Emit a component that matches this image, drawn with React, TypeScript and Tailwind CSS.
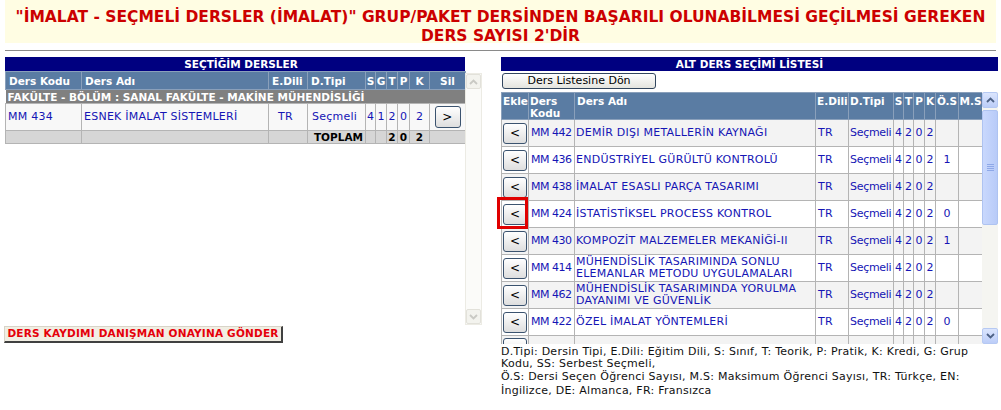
import React from "react";

type AltRow = {
  kod: string;
  ad: string[];
  os: string;
};

const altRows: AltRow[] = [
  { kod: "MM 442", ad: ["DEMİR DIŞI METALLERİN KAYNAĞI"], os: "" },
  { kod: "MM 436", ad: ["ENDÜSTRİYEL GÜRÜLTÜ KONTROLÜ"], os: "1" },
  { kod: "MM 438", ad: ["İMALAT ESASLI PARÇA TASARIMI"], os: "" },
  { kod: "MM 424", ad: ["İSTATİSTİKSEL PROCESS KONTROL"], os: "0" },
  { kod: "MM 430", ad: ["KOMPOZİT MALZEMELER MEKANİĞİ-II"], os: "1" },
  { kod: "MM 414", ad: ["MÜHENDİSLİK TASARIMINDA SONLU", "ELEMANLAR METODU UYGULAMALARI"], os: "" },
  { kod: "MM 462", ad: ["MÜHENDİSLİK TASARIMINDA YORULMA", "DAYANIMI VE GÜVENLİK"], os: "" },
  { kod: "MM 422", ad: ["ÖZEL İMALAT YÖNTEMLERİ"], os: "0" },
];

function Chevron({ up, color }: { up?: boolean; color: string }) {
  return (
    <svg width="9" height="6" viewBox="0 0 9 6">
      <path
        d={up ? "M1 5 L4.5 1.5 L8 5" : "M1 1 L4.5 4.5 L8 1"}
        fill="none"
        stroke={color}
        strokeWidth="1.8"
      />
    </svg>
  );
}

function SmallBtn({ label }: { label: string }) {
  return (
    <div className="flex h-[21px] w-[24px] items-center justify-center rounded-[3px] border border-[#3b536f] bg-gradient-to-b from-[#ffffff] to-[#dedede] text-[12px] leading-none tracking-normal text-black">
      {label}
    </div>
  );
}

function LeftPanel() {
  return (
    <div className="flex w-[477px] flex-col">
      <div className="h-[14px] w-[460px] bg-[#000080] pl-[12px] text-center text-[10.5px] font-bold leading-[14px] text-white">
        SEÇTİĞİM DERSLER
      </div>
      <div className="flex h-[254px]">
        <div className="w-[460px]">
          <table className="w-[460px] table-fixed border-collapse text-[11px] leading-[12px] tracking-[0.25px]">
            <colgroup>
              <col className="w-[76px]" />
              <col className="w-[187px]" />
              <col className="w-[39px]" />
              <col className="w-[58px]" />
              <col className="w-[10px]" />
              <col className="w-[11px]" />
              <col className="w-[11px]" />
              <col className="w-[12px]" />
              <col className="w-[20px]" />
              <col className="w-[36px]" />
            </colgroup>
            <thead>
              <tr className="h-[18px] bg-[#5a7ca3] text-left text-[10.5px] font-bold tracking-normal text-white">
                <th className="border border-[#8aa0bb] pl-[3px]">Ders Kodu</th>
                <th className="border border-[#8aa0bb] pl-[3px]">Ders Adı</th>
                <th className="border border-[#8aa0bb] pl-[3px]">E.Dili</th>
                <th className="border border-[#8aa0bb] pl-[3px]">D.Tipi</th>
                <th className="border border-[#8aa0bb] text-center">S</th>
                <th className="border border-[#8aa0bb] text-center">G</th>
                <th className="border border-[#8aa0bb] text-center">T</th>
                <th className="border border-[#8aa0bb] text-center">P</th>
                <th className="border border-[#8aa0bb] text-center">K</th>
                <th className="border border-[#8aa0bb] text-center">Sil</th>
              </tr>
            </thead>
            <tbody>
              <tr className="h-[14px] bg-[#808080] text-[10.5px] font-bold tracking-normal text-white">
                <td colSpan={10} className="whitespace-nowrap pl-[2px]">
                  FAKÜLTE - BÖLÜM : SANAL FAKÜLTE - MAKİNE MÜHENDİSLİĞİ
                </td>
              </tr>
              <tr className="h-[27px] bg-[#f8f8f8] text-[#1515b5]">
                <td className="border border-[#b4b4b4] pl-[2px]">MM 434</td>
                <td className="border border-[#b4b4b4] pl-[2px]">ESNEK İMALAT SİSTEMLERİ</td>
                <td className="border border-[#b4b4b4] pl-[9px]">TR</td>
                <td className="border border-[#b4b4b4] pl-[4px]">Seçmeli</td>
                <td className="border border-[#b4b4b4] text-center">4</td>
                <td className="border border-[#b4b4b4] text-center">1</td>
                <td className="border border-[#b4b4b4] text-center">2</td>
                <td className="border border-[#b4b4b4] text-center">0</td>
                <td className="border border-[#b4b4b4] text-center">2</td>
                <td className="border border-[#b4b4b4]">
                  <div className="flex justify-center">
                    <div className="flex h-[22px] w-[26px] items-center justify-center rounded-[3px] border border-[#3b536f] bg-gradient-to-b from-[#ffffff] to-[#dedede] text-[12px] leading-none text-black">
                      &gt;
                    </div>
                  </div>
                </td>
              </tr>
              <tr className="h-[12px] bg-[#d6d6d6] text-[10.5px] font-bold tracking-normal text-black">
                <td className="border border-[#b4b4b4]"></td>
                <td className="border border-[#b4b4b4]"></td>
                <td className="border border-[#b4b4b4]"></td>
                <td className="border border-[#b4b4b4] pr-[2px] text-right">TOPLAM</td>
                <td className="border border-[#b4b4b4]"></td>
                <td className="border border-[#b4b4b4]"></td>
                <td className="border border-[#b4b4b4] text-center">2</td>
                <td className="border border-[#b4b4b4] text-center">0</td>
                <td className="border border-[#b4b4b4] text-center">2</td>
                <td className="border border-[#b4b4b4]"></td>
              </tr>
            </tbody>
          </table>
        </div>
        <div className="mt-[2px] flex w-[17px] flex-col justify-between border border-[#ecebe4] bg-[#fbfbf9]">
          <div className="flex h-[15px] items-center justify-center rounded-[2px] border border-[#e2e1da] bg-[#f3f3ee]">
            <Chevron up color="#c9c9c4" />
          </div>
          <div className="flex h-[15px] items-center justify-center rounded-[2px] border border-[#e2e1da] bg-[#f3f3ee]">
            <Chevron color="#c9c9c4" />
          </div>
        </div>
      </div>
      <div className="-ml-[1px] mt-[1px] flex h-[17px] w-[279px] items-center justify-center border-b-2 border-l border-r-2 border-t border-b-[#404040] border-l-[#d8d4c8] border-r-[#404040] border-t-[#d8d4c8] bg-[#f1eee3] text-[10.5px] font-bold tracking-[0.2px] text-[#e5000a]">
        DERS KAYDIMI DANIŞMAN ONAYINA GÖNDER
      </div>
    </div>
  );
}

function RightPanel() {
  const cell = "border border-[#b4b4b4]";
  return (
    <div className="ml-[19px] flex w-[497px] flex-col">
      <div className="h-[14px] w-full bg-[#000080] text-center text-[10.5px] font-bold leading-[14px] text-white">
        ALT DERS SEÇİMİ LİSTESİ
      </div>
      <div className="ml-[1px] mt-[2px] flex h-[16px] w-[154px] items-center justify-center rounded-[3px] border border-[#32465e] bg-gradient-to-b from-[#ffffff] to-[#e4e4de] text-[11px] text-black">
        Ders Listesine Dön
      </div>
      <div className="relative mt-[3px] flex h-[252px]">
        <div className="h-[252px] w-[482px] overflow-hidden">
          <table className="w-[481px] table-fixed border-collapse text-[11px] leading-[12px] tracking-[0.25px]">
            <colgroup>
              <col className="w-[27px]" />
              <col className="w-[46px]" />
              <col className="w-[241px]" />
              <col className="w-[33px]" />
              <col className="w-[45px]" />
              <col className="w-[10px]" />
              <col className="w-[10px]" />
              <col className="w-[11px]" />
              <col className="w-[11px]" />
              <col className="w-[23px]" />
              <col className="w-[24px]" />
            </colgroup>
            <thead>
              <tr className="h-[26px] bg-[#5a7ca3] text-left align-top text-[10.5px] font-bold tracking-normal text-white">
                <th className="border border-[#8aa0bb] pl-[1px] pt-[2px]">Ekle</th>
                <th className="border border-[#8aa0bb] pl-[1px] pt-[2px]">
                  Ders
                  <br />
                  Kodu
                </th>
                <th className="border border-[#8aa0bb] pl-[2px] pt-[2px]">Ders Adı</th>
                <th className="border border-[#8aa0bb] pl-[1px] pt-[2px]">E.Dili</th>
                <th className="border border-[#8aa0bb] pl-[1px] pt-[2px]">D.Tipi</th>
                <th className="border border-[#8aa0bb] pt-[2px] text-center">S</th>
                <th className="border border-[#8aa0bb] pt-[2px] text-center">T</th>
                <th className="border border-[#8aa0bb] pt-[2px] text-center">P</th>
                <th className="border border-[#8aa0bb] pt-[2px] text-center">K</th>
                <th className="border border-[#8aa0bb] pt-[2px] text-center">Ö.S</th>
                <th className="border border-[#8aa0bb] pt-[2px] text-center">M.S</th>
              </tr>
            </thead>
            <tbody className="text-[#1515b5]">
              {altRows.map((r, i) => (
                <tr key={r.kod} className={i % 2 === 0 ? "h-[27px] bg-[#f3f3f3]" : "h-[27px] bg-white"}>
                  <td className={cell + " pl-[1px]"}>
                    <SmallBtn label="<" />
                  </td>
                  <td className={cell + " whitespace-nowrap pl-[2px] tracking-[-0.5px]"}>{r.kod}</td>
                  <td className={cell + " pl-[1px]"}>
                    {r.ad.map((l, j) => (
                      <div key={j} className="whitespace-nowrap">
                        {l}
                      </div>
                    ))}
                  </td>
                  <td className={cell + " pl-[2px]"}>TR</td>
                  <td className={cell + " whitespace-nowrap pl-[1px] tracking-[-0.3px]"}>Seçmeli</td>
                  <td className={cell + " text-center"}>4</td>
                  <td className={cell + " text-center"}>2</td>
                  <td className={cell + " text-center"}>0</td>
                  <td className={cell + " text-center"}>2</td>
                  <td className={cell + " text-center"}>{r.os}</td>
                  <td className={cell}></td>
                </tr>
              ))}
              <tr className="h-[27px] bg-[#f3f3f3] align-top">
                <td className={cell + " pl-[1px] pt-[2px]"}>
                  <SmallBtn label="" />
                </td>
                <td className={cell}></td>
                <td className={cell}></td>
                <td className={cell}></td>
                <td className={cell}></td>
                <td className={cell}></td>
                <td className={cell}></td>
                <td className={cell}></td>
                <td className={cell}></td>
                <td className={cell}></td>
                <td className={cell}></td>
              </tr>
            </tbody>
          </table>
        </div>
        <div className="flex w-[16px] flex-col bg-[#f5f5f1]">
          <div className="flex h-[16px] items-center justify-center rounded-[2px] border border-[#b6c9f3] bg-gradient-to-b from-[#dbe5fd] to-[#bccdf8]">
            <Chevron up color="#4d6185" />
          </div>
          <div className="mt-[2px] flex h-[115px] flex-col items-center justify-center gap-[1px] rounded-[2px] border border-[#aec3f1] bg-gradient-to-r from-[#c9d8fd] to-[#b8cbf8]">
            <div className="h-[1px] w-[7px] bg-[#8ea8e8]" />
            <div className="h-[1px] w-[7px] bg-[#8ea8e8]" />
            <div className="h-[1px] w-[7px] bg-[#8ea8e8]" />
            <div className="h-[1px] w-[7px] bg-[#8ea8e8]" />
          </div>
          <div className="flex-1" />
          <div className="flex h-[16px] items-center justify-center rounded-[2px] border border-[#b6c9f3] bg-gradient-to-b from-[#dbe5fd] to-[#bccdf8]">
            <Chevron color="#4d6185" />
          </div>
        </div>
        <div className="pointer-events-none absolute left-[-4px] top-[105px] h-[32px] w-[31px] border-[3px] border-[#e00000]" />
      </div>
      <div className="mt-[2px] text-[11px] tracking-[0.25px] text-[#111]">
        <div className="leading-[12px]">
          D.Tipi: Dersin Tipi, E.Dili: Eğitim Dili, S: Sınıf, T: Teorik, P: Pratik, K: Kredi, G: Grup
          <br />
          Kodu, SS: Serbest Seçmeli,
        </div>
        <div className="leading-[14px]">
          Ö.S: Dersi Seçen Öğrenci Sayısı, M.S: Maksimum Öğrenci Sayısı, TR: Türkçe, EN:
          <br />
          İngilizce, DE: Almanca, FR: Fransızca
        </div>
      </div>
    </div>
  );
}

export default function App() {
  return (
    <div className="h-[410px] w-[1001px] overflow-hidden bg-white font-['DejaVu_Sans',sans-serif]">
      <div className="mx-[5px] h-[43px] bg-[#fffde3] pt-[8px] text-center text-[15.5px] font-bold leading-[19px] text-[#cc0000]">
        "İMALAT - SEÇMELİ DERSLER (İMALAT)" GRUP/PAKET DERSİNDEN BAŞARILI OLUNABİLMESİ GEÇİLMESİ GEREKEN
        <br />
        DERS SAYISI 2'DİR
      </div>
      <div className="mx-[5px] mt-[7px] border-t border-[#8a8a8a]" />
      <div className="mt-[6px] flex pl-[5px]">
        <LeftPanel />
        <RightPanel />
      </div>
    </div>
  );
}
